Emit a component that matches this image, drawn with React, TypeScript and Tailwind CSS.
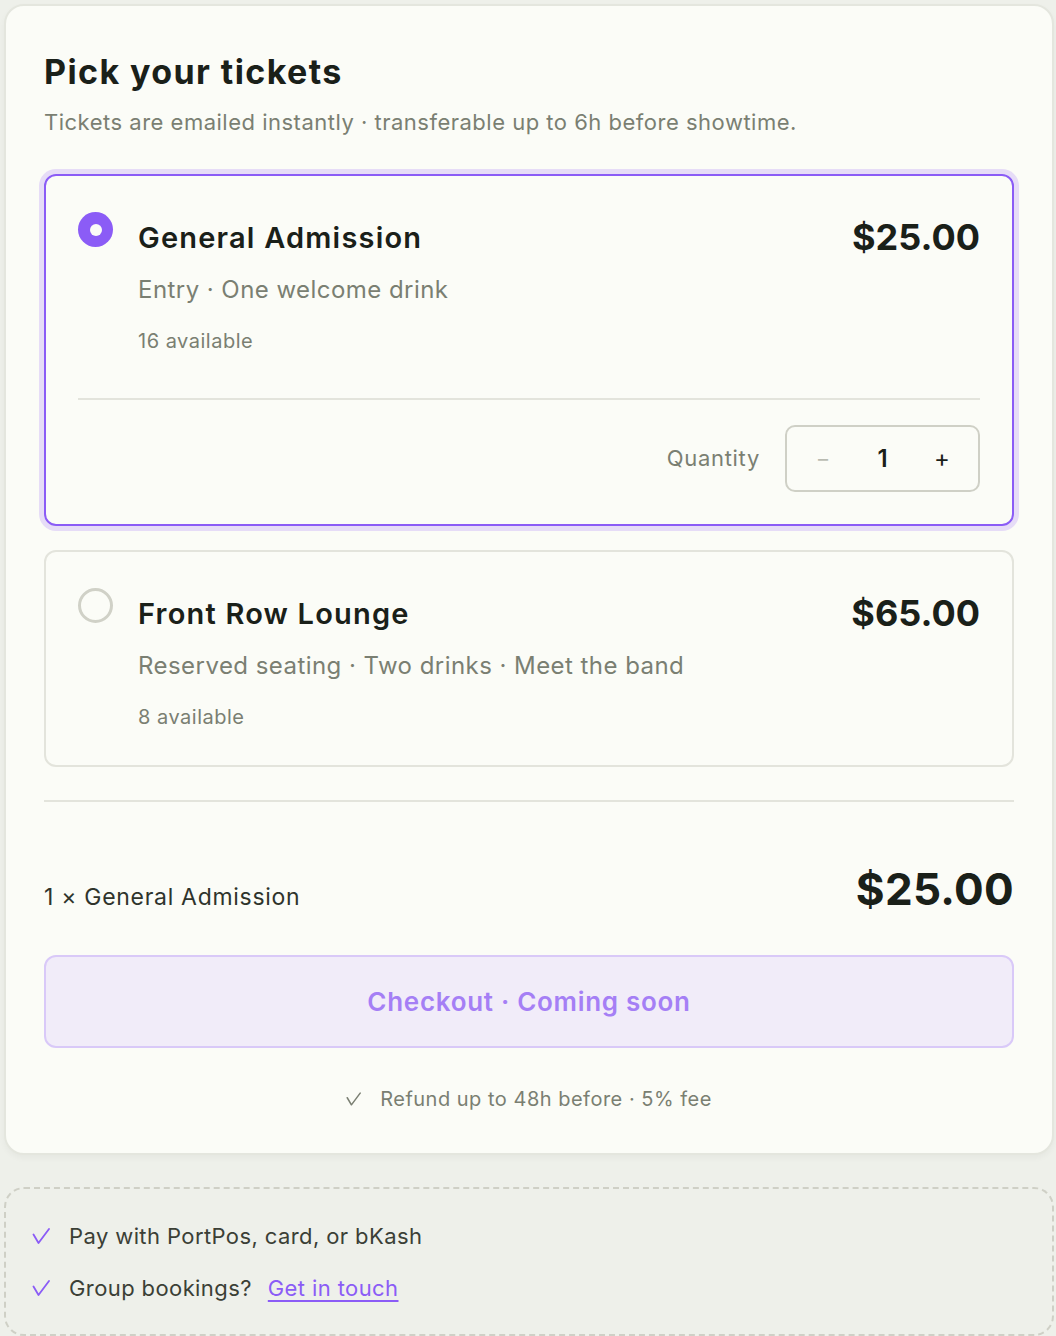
import { useState } from 'react';

interface Tier {
  id: string;
  name: string;
  perks: string;
  price: number;
  left: number;
}

const TIERS: Tier[] = [
  { id: 'ga', name: 'General Admission', perks: 'Entry · One welcome drink', price: 25, left: 16 },
  { id: 'frl', name: 'Front Row Lounge', perks: 'Reserved seating · Two drinks · Meet the band', price: 65, left: 8 },
];

const money = (n: number) => `$${n.toFixed(2)}`;

function Check({ className }: { className?: string }) {
  return (
    <svg viewBox="0 0 18 16" className={className} fill="none" stroke="currentColor" strokeWidth={1.8} strokeLinecap="round" strokeLinejoin="round">
      <path d="M1.5 6.5 L6.5 15 L17 1" />
    </svg>
  );
}

function Radio({ on }: { on: boolean }) {
  return on ? (
    <span className="block w-[35px] h-[35px] shrink-0 rounded-full bg-[#8b5cf6] flex items-center justify-center">
      <span className="block w-[12px] h-[12px] rounded-full bg-[#fbfcf7]" />
    </span>
  ) : (
    <span className="block w-[35px] h-[35px] shrink-0 rounded-full border-[3px] border-[#d0d1c7]" />
  );
}

function TierCard({
  tier,
  selected,
  qty,
  onSelect,
  onQty,
}: {
  tier: Tier;
  selected: boolean;
  qty: number;
  onSelect: () => void;
  onQty: (n: number) => void;
}) {
  return (
    <div
      onClick={onSelect}
      className={`rounded-[12px] border-2 px-8 pt-8 cursor-pointer ${
        selected
          ? 'border-[#8b5cf6] shadow-[0_0_0_5px_#e6dcf7] pb-8'
          : 'border-[#e3e4dc] pb-[34px]'
      }`}
    >
      <div className="flex items-start">
        <div className="pt-[4px]">
          <Radio on={selected} />
        </div>
        <div className="flex-1 min-w-0 ml-[25px]">
          <h3 className="text-[29px] leading-[40px] font-semibold text-[#1a2019] pt-[10px] tracking-[1.2px]">{tier.name}</h3>
          <p className="text-[24px] leading-[32px] text-[#7a7f72] mt-[16px] tracking-[0.45px]">{tier.perks}</p>
          <p className="text-[20px] leading-[28px] text-[#7a7f72] mt-[21px] tracking-[0.5px]">{tier.left} available</p>
        </div>
        <div className="text-[36px] leading-[44px] font-bold text-[#1a2019] pt-[7px]">{money(tier.price)}</div>
      </div>

      {selected && (
        <div className="mt-[43px] pt-[25px] border-t-2 border-[#e3e4dc] flex items-center justify-end gap-[25px]">
          <span className="text-[22px] text-[#7a7f72] tracking-[0.7px]">Quantity</span>
          <div
            className="w-[195px] h-[67px] rounded-[10px] border-2 border-[#cfd0c6] flex items-center justify-between px-[26px]"
            onClick={e => e.stopPropagation()}
          >
            <button
              onClick={() => onQty(Math.max(1, qty - 1))}
              className="text-[22px] text-[#b9bbb1] w-[20px]"
            >
              −
            </button>
            <span className="text-[24px] font-semibold text-[#1a2019]">{qty}</span>
            <button
              onClick={() => onQty(Math.min(tier.left, qty + 1))}
              className="text-[24px] text-[#1a2019] w-[20px]"
            >
              +
            </button>
          </div>
        </div>
      )}
    </div>
  );
}

export default function App() {
  const [selectedId, setSelectedId] = useState('ga');
  const [qty, setQty] = useState(1);
  const tier = TIERS.find(t => t.id === selectedId)!;

  return (
    <div
      className="min-h-screen bg-[#eef0ea] pl-1 pt-1 pr-[2px]"
      style={{ fontFamily: 'Inter, "Noto Sans", sans-serif' }}
    >
      <div className="rounded-[20px] border-2 border-[#e4e6de] bg-[#fbfcf7] px-[38px] pt-[44px] pb-[39px] shadow-[0_3px_6px_rgba(0,0,0,0.04)]">
        <h1 className="text-[34px] leading-[44px] font-bold text-[#1a2019] tracking-[1.4px]">Pick your tickets</h1>
        <p className="text-[22px] leading-[30px] text-[#7a7f72] mt-[13px] tracking-[0.5px]">
          Tickets are emailed instantly · transferable up to 6h before showtime.
        </p>

        <div className="mt-[37px] flex flex-col gap-[24px]">
          {TIERS.map(t => (
            <TierCard
              key={t.id}
              tier={t}
              selected={t.id === selectedId}
              qty={qty}
              onSelect={() => {
                if (t.id !== selectedId) {
                  setSelectedId(t.id);
                  setQty(1);
                }
              }}
              onQty={setQty}
            />
          ))}
        </div>

        <div className="mt-[33px] border-t-2 border-[#e3e4dc]" />

        <div className="mt-[61px] flex items-baseline justify-between">
          <span className="text-[23px] text-[#2f342c] tracking-[0.7px]">
            {qty} × {tier.name}
          </span>
          <span className="text-[44px] leading-[52px] font-bold text-[#1a2019] tracking-[0.3px]">{money(tier.price * qty)}</span>
        </div>

        <button
          disabled
          className="mt-[40px] w-full h-[93px] rounded-[12px] border-2 border-[#d9c9f8] bg-[#f1ecf9] text-[26px] font-semibold text-[#a57ff5] tracking-[0.7px]"
        >
          Checkout · Coming soon
        </button>

        <p className="mt-[36px] flex items-center justify-center text-[20px] text-[#7a7f72] tracking-[0.5px]">
          <Check className="w-[15px] h-[14px] mr-[19px]" />
          Refund up to 48h before · 5% fee
        </p>
      </div>

      <div className="mt-[32px] rounded-[20px] border-2 border-dashed border-[#cfd0c6] px-[26px] pt-[31px] pb-[30px] flex flex-col gap-[20px]">
        <div className="flex items-center text-[22px] leading-[32px] text-[#3b3f36] tracking-[0.4px]">
          <Check className="w-[18px] h-[16px] mr-[19px] text-[#8b5cf6]" />
          Pay with PortPos, card, or bKash
        </div>
        <div className="flex items-center text-[22px] leading-[32px] text-[#3b3f36] tracking-[0.4px]">
          <Check className="w-[18px] h-[16px] mr-[19px] text-[#8b5cf6]" />
          Group bookings?
          <a href="#" className="ml-[16px] text-[#8b5cf6] underline underline-offset-[4px]">
            Get in touch
          </a>
        </div>
      </div>
    </div>
  );
}
